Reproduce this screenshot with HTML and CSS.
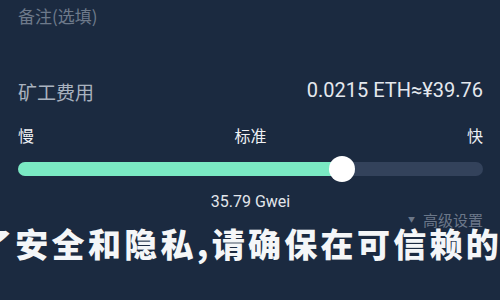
FILE: index.html
```html
<!DOCTYPE html>
<html lang="zh-CN">
<head>
<meta charset="utf-8">
<title>矿工费用</title>
<link rel="stylesheet" href="styles.css">
</head>
<body>
<main class="panel">
  <div class="remark">备注(选填)</div>
  <div class="fee">
    <span class="fee-label">矿工费用</span>
    <span class="fee-value">0.0215 ETH≈¥39.76</span>
  </div>
  <div class="speeds">
    <span>慢</span>
    <span>标准</span>
    <span>快</span>
  </div>
  <div class="slider">
    <div class="slider-fill" style="width: 69.7%"></div>
    <div class="slider-thumb" style="left: 69.7%"></div>
  </div>
  <div class="gwei">35.79 Gwei</div>
  <div class="advanced"><span class="caret">▼</span>高级设置</div>
</main>
<div class="caption">了安全和隐私,请确保在可信赖的环境</div>
</body>
</html>
```
FILE: styles.css
```css
html, body {
  margin: 0;
  padding: 0;
  background: #1b2a40;
  width: 500px;
  height: 300px;
  overflow: hidden;
}
body {
  position: relative;
  font-family: Roboto, "Noto Sans CJK SC", sans-serif;
}
.panel {
  padding: 7px 17px 0 18px;
  display: flex;
  flex-direction: column;
}
.remark {
  font-family: "Noto Sans CJK SC", sans-serif;
  font-size: 17px;
  line-height: 17px;
  color: #6e7a8b;
}
.fee {
  margin-top: 58px;
  display: flex;
  justify-content: space-between;
  align-items: flex-start;
  height: 20px;
}
.fee-label {
  font-family: "Noto Sans CJK SC", sans-serif;
  font-size: 19px;
  line-height: 20px;
  color: #a9b2bf;
}
.fee-value {
  font-family: Roboto, sans-serif;
  font-size: 20px;
  line-height: 20px;
  color: #e4e8ee;
  margin-top: -2px;
}
.speeds {
  margin-top: 25px;
  display: flex;
  justify-content: space-between;
  font-family: "Noto Sans CJK SC", sans-serif;
  font-size: 16px;
  line-height: 16px;
  color: #eef0f4;
}
.slider {
  margin-top: 19px;
  position: relative;
  height: 14px;
  border-radius: 7px;
  background: #33425b;
}
.slider-fill {
  height: 100%;
  border-radius: 7px;
  background: #7ae9c3;
}
.slider-thumb {
  position: absolute;
  top: 50%;
  width: 26px;
  height: 26px;
  margin: -13px 0 0 -13px;
  border-radius: 50%;
  background: #ffffff;
}
.gwei {
  margin-top: 18px;
  text-align: center;
  font-size: 16px;
  line-height: 16px;
  color: #e2e6ec;
}
.advanced {
  margin-top: 2px;
  align-self: flex-end;
  font-family: "Noto Sans CJK SC", sans-serif;
  font-size: 15px;
  line-height: 15px;
  color: #6b7789;
  display: flex;
  align-items: center;
}
.caret {
  font-size: 7px;
  margin-right: 8px;
  color: #6b7789;
}
.caption {
  position: absolute;
  top: 229px;
  left: -21px;
  white-space: nowrap;
  font-family: "Noto Sans CJK SC", sans-serif;
  font-weight: 900;
  font-size: 33px;
  line-height: 28px;
  letter-spacing: 3.3px;
  color: #f4f6f8;
}
```
